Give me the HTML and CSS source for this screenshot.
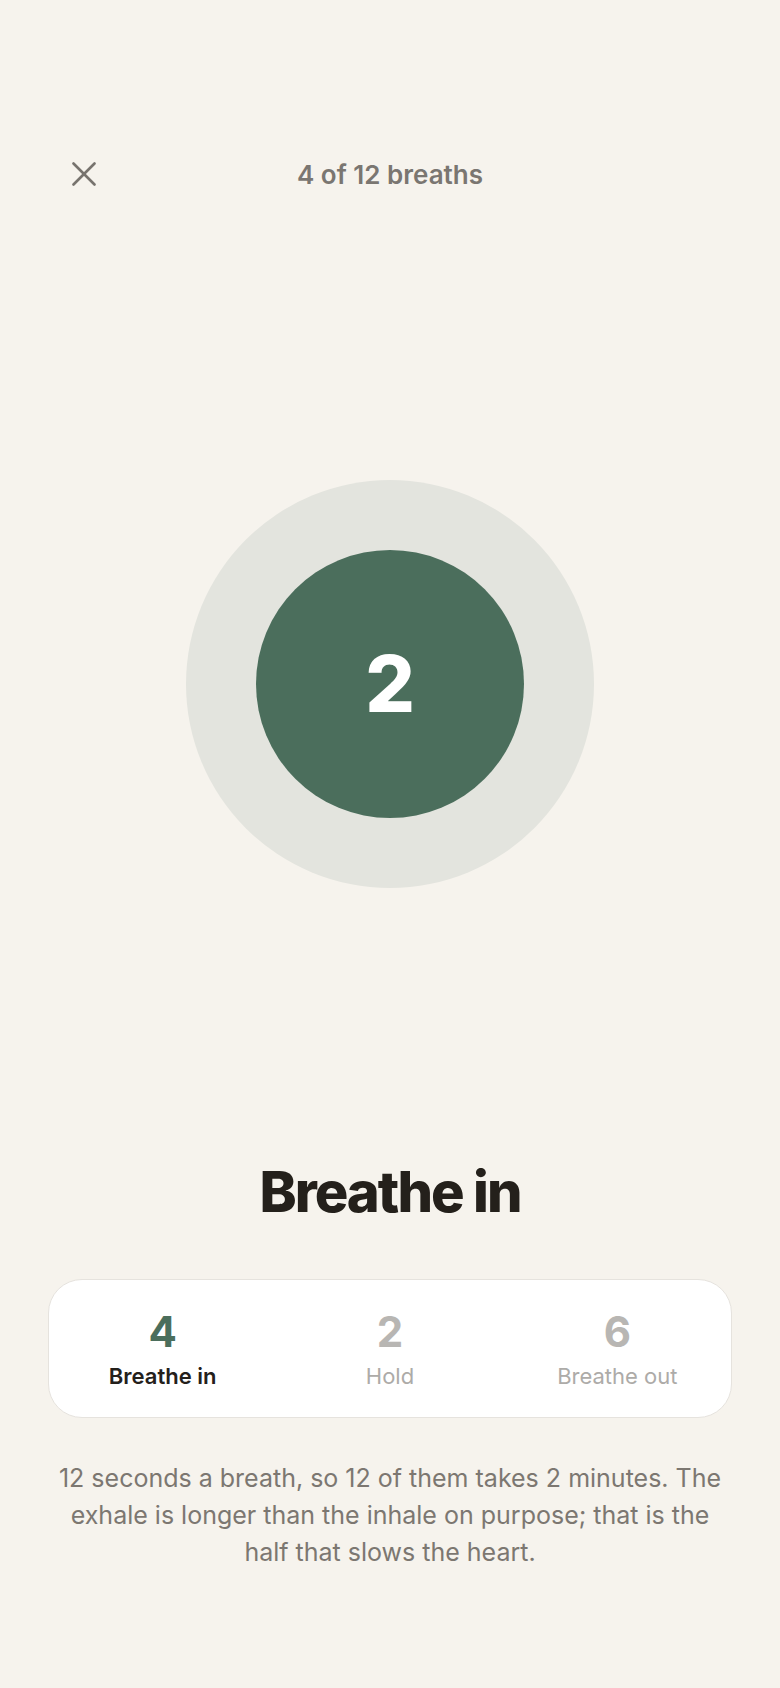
FILE: index.html
```html
<!DOCTYPE html>
<html lang="en">
<head>
    <meta charset="UTF-8">
    <meta name="viewport" content="width=device-width, initial-scale=1.0">
    <title>Breathing session</title>
    <link rel="stylesheet" href="styles.css">
</head>
<body>
    <div id="session">
        <header class="session-header">
            <button class="close-btn" aria-label="Close">
                <svg width="24" height="24" viewBox="0 0 24 24" fill="none" stroke="currentColor" stroke-width="2.6" stroke-linecap="round">
                    <line x1="1.5" y1="1.5" x2="22.5" y2="22.5"/>
                    <line x1="22.5" y1="1.5" x2="1.5" y2="22.5"/>
                </svg>
            </button>
            <div class="progress">4 of 12 breaths</div>
            <span></span>
        </header>

        <div class="stage">
            <div class="ring">
                <div class="core">
                    <span class="count">2</span>
                </div>
            </div>
        </div>

        <h1 class="phase">Breathe in</h1>

        <div class="steps">
            <div class="step active">
                <span class="step-num">4</span>
                <span class="step-label">Breathe in</span>
            </div>
            <div class="step">
                <span class="step-num">2</span>
                <span class="step-label">Hold</span>
            </div>
            <div class="step">
                <span class="step-num">6</span>
                <span class="step-label">Breathe out</span>
            </div>
        </div>

        <p class="note">12 seconds a breath, so 12 of them takes 2 minutes. The exhale is longer than the inhale on purpose; that is the half that slows the heart.</p>
    </div>
</body>
</html>
```

FILE: styles.css
```css
body {
    margin: 0;
    background: #f6f3ed;
    font-family: Inter, "Noto Sans", sans-serif;
    color: #24201b;
}

#session {
    padding: 150px 48px 0;
    display: flex;
    flex-direction: column;
}

.session-header {
    display: grid;
    grid-template-columns: 48px 1fr 48px;
    align-items: center;
    height: 48px;
    padding: 0 12px;
}

.close-btn {
    width: 48px;
    height: 48px;
    padding: 0;
    border: none;
    background: none;
    color: #77736e;
    display: flex;
    align-items: center;
    justify-content: center;
    cursor: pointer;
}

.progress {
    text-align: center;
    font-size: 26px;
    font-weight: 600;
    color: #7a7671;
}

.stage {
    margin-top: 282px;
    display: flex;
    justify-content: center;
}

.ring {
    width: 408px;
    height: 408px;
    border-radius: 50%;
    background: #e3e4de;
    display: flex;
    align-items: center;
    justify-content: center;
}

.core {
    width: 268px;
    height: 268px;
    border-radius: 50%;
    background: #4b6e5c;
    display: flex;
    align-items: center;
    justify-content: center;
}

.count {
    color: #fff;
    font-size: 78px;
    font-weight: 800;
    line-height: 1;
}

.phase {
    margin: 276px 0 0;
    text-align: center;
    font-size: 56px;
    font-weight: 800;
    line-height: 1;
    letter-spacing: -0.035em;
    color: #24201b;
}

.steps {
    margin-top: 59px;
    display: flex;
    background: #fff;
    border: 1px solid #e6e3de;
    border-radius: 34px;
    padding: 31px 0 28px;
}

.step {
    flex: 1;
    display: flex;
    flex-direction: column;
    align-items: center;
    gap: 10px;
}

.step-num {
    font-size: 42px;
    font-weight: 700;
    line-height: 1;
    color: #b8b6b3;
}

.step-label {
    font-size: 22px;
    line-height: 1.2;
    color: #adaba8;
}

.step.active .step-num {
    color: #4b6e5c;
}

.step.active .step-label {
    color: #24201b;
    font-weight: 600;
}

.note {
    margin: 42px 0 0;
    text-align: center;
    font-size: 25px;
    line-height: 1.48;
    color: #7c7771;
}
```
